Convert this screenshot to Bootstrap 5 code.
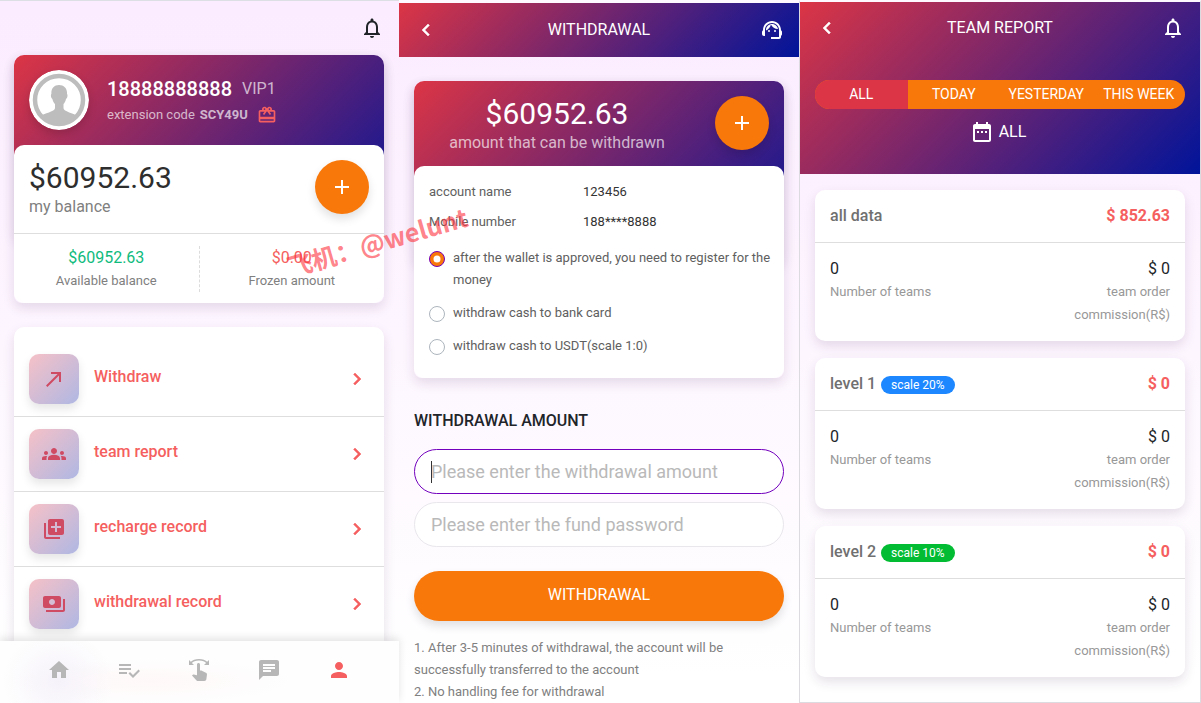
<!DOCTYPE html>
<html lang="en">
<head>
<meta charset="utf-8">
<meta name="viewport" content="width=device-width, initial-scale=1">
<title>Wallet</title>
<link href="https://cdn.jsdelivr.net/npm/bootstrap@5.3.0/dist/css/bootstrap.min.css" rel="stylesheet">
<style>
  :root { --brand: linear-gradient(135deg, #dc3545, #00149a); --orange: #f9780a; --coral: #f55f60; }
  body { font-family: Roboto, "Noto Sans CJK SC", sans-serif; font-size: 16px; line-height: 22px; color: #212529; background: #fff; }
  svg { fill: currentColor; display: block; flex: none; }
  .ic { width: 24px; height: 24px; }
  .screens { display: grid; grid-template-columns: 399fr 400fr 402fr; position: relative; }
  .screen { background: linear-gradient(#fbecff, #fff 96%); min-width: 0; }
  .account { border-top: 1px solid #dcdfe3; }
  .account .inset { padding-left: 14px; padding-right: 15px; }
  .withdraw { border-top: 3px solid #fdf9ff; }
  .report { border: 1px solid #dcdce0; border-top: 2px solid #fdf9ff; }
  .inset, .bar { padding-left: 15px; padding-right: 15px; }
  .bar { height: 54px; }
  .report .bar { height: 52px; }
  .text-13 { font-size: 13px; }
  .brand { background: var(--brand); color: #fff; }
  .raised { box-shadow: 0 5px 12px rgba(60, 20, 80, .13); }
  .hero { border-radius: 10px; padding: 15px 15px 110px; }
  .hero .who { margin-left: 18px; padding-top: 6px; }
  .sheet { background: #fff; border-radius: 10px; margin-top: -95px; }
  .balance { padding: 15px; }
  .stats { padding: 12px 0 11px; }
  .withdraw .sheet { margin-top: -98px; padding: 11px 15px 21px; }
  .avatar { width: 60px; height: 60px; border-radius: 50%; box-shadow: 0 4px 8px rgba(0,0,0,.15); }
  .name { font-size: 20px; line-height: 26px; font-weight: 500; gap: 10px; }
  .soft { color: rgba(255,255,255,.68); }
  .code { font-size: 13px; line-height: 26px; gap: 5px; }
  .sum { font-size: 30px; line-height: 36px; }
  .sheet .sum { color: #2e2e2e; }
  .under { line-height: 22px; }
  .muted { color: #808080; }
  .gain { color: #0fbb7d; }
  .plus { width: 54px; height: 54px; border: 0; border-radius: 50%; background: var(--orange); color: #fff; padding: 15px; box-shadow: 0 5px 10px rgba(0,0,0,.12); flex: none; }
  .hero .plus { margin-left: 30px; }
  .rule-b { border-bottom: 1px solid #dedede; }
  .half { line-height: 23px; flex: 1 1 0; text-align: center; }
  .half + .half { border-left: 1px dashed #dcdcdc; }
  .coral { color: var(--coral); }
  .menu { background: #fff; border-radius: 10px 10px 0 0; margin-top: 24px; padding-top: 15px; }
  .menu a { color: var(--coral); font-weight: 500; height: 75px; padding: 0 15px; gap: 15px; text-decoration: none; border-bottom: 1px solid #dedede; }
  .menu a:last-child { height: 74px; border-bottom: 0; }
  .tile { width: 50px; height: 50px; border-radius: 10px; padding: 13px; background: linear-gradient(135deg, #f6c1c7, #afb7e3); color: #cf4b63; box-shadow: 0 5px 10px rgba(0,0,0,.1); }
  .tabs { height: 62px; padding: 0 25px 4px 24px; position: relative; box-shadow: 0 -3px 8px rgba(0,0,0,.11);
    background: radial-gradient(55px 50px at 58px 40px, #f6f2fa, transparent), radial-gradient(140px 22px at 150px 40px, #fff8f8, transparent), #fefefe; }
  .tabs a { flex: 1 1 0; display: flex; justify-content: center; color: #b7b7b7; }
  .tabs a.coral { color: var(--coral); }
  .detail { line-height: 30px; margin: 0 0 10px; }
  .detail dt { font-weight: 400; color: #606060; width: 154px; }
  .detail dd { margin: 0; color: #333; }
  .choice { display: flex; gap: 8px; color: #606060; margin: 0 -8px 11px 0; }
  .choice .form-check-input { width: 16px; height: 16px; margin: 4px 0 0; flex: none; border-color: #adb5bd; }
  .choice .form-check-input:checked { background-color: var(--orange); border-color: #7500b8; }
  .heading { font-size: 16px; font-weight: 500; line-height: 24px; margin: 31px 0 16px; }
  .pill { height: 45px; border-radius: 23px; border: 1px solid #e9e6ec; font-size: 18px; padding: 0 16px; color: #212529; background: #fff; }
  .pill::placeholder { color: #b9b9b9; opacity: 1; }
  .pill.current { border-color: #7200bd; background: linear-gradient(#333, #333) 16px center / 1px 22px no-repeat #fff; }
  .go { height: 50px; border-radius: 25px; background: var(--orange); color: #fff; border: 0; box-shadow: 0 5px 10px rgba(0,0,0,.12); margin-top: 24px; padding: 0 0 2px; }
  .terms { margin: 16px 0 0; }
  .summary { padding-bottom: 30px; }
  .seg { border-radius: 15px; background: var(--orange); overflow: hidden; margin: 26px 0 11px; }
  .seg button { flex: 1 1 0; border: 0; padding: 0 0 2px; height: 29px; color: #fff; background: none; font-size: 14px; white-space: nowrap; }
  .seg button.on { background: #dc3545; }
  .range { gap: 5px; padding-right: 4px; }
  .level { background: #fff; border-radius: 10px; margin-bottom: 17px; }
  .level header { padding: 14px 15px; line-height: 24px; color: #707070; font-weight: 500; }
  .level header span { gap: 5px; }
  .level .figures { padding: 14px 15px 15px; line-height: 23px; }
  .level .note { font-size: 13px; color: #989898; }
  .level .right { width: 34%; text-align: right; }
  .scale { font-size: 12px; font-weight: 400; line-height: 18px; padding: 0 10px; border-radius: 9px; color: #fff; background: #1c87ff; margin-top: 2px; }
  .scale.green { background: #02bc33; }
  .stamp { position: absolute; left: 377px; top: 241px; font: 700 25px/30px "Noto Sans CJK SC", sans-serif; color: rgba(252, 50, 60, .62); white-space: nowrap; transform: translate(-50%, -50%) rotate(-16deg); pointer-events: none; }
</style>
</head>
<body>
<svg class="d-none" aria-hidden="true">
  <symbol id="bell" viewBox="0 0 24 24"><path d="M12 22c1.100 0 2-.9 2-2h-4c0 1.100.9 2 2 2zm6-6v-5c0-3.070-1.630-5.640-4.500-6.320V4c0-.83-.67-1.500-1.500-1.500s-1.500.67-1.500 1.500v.68C7.640 5.360 6 7.920 6 11v5l-2 2v1h16v-1l-2-2zm-2 1H8v-6c0-2.480 1.510-4.500 4-4.500s4 2.020 4 4.500v6z"/></symbol>
  <symbol id="left" viewBox="0 0 24 24"><path d="M15.410 7.410 14 6l-6 6 6 6 1.410-1.410L10.830 12z" stroke="currentColor" stroke-width=".5"/></symbol>
  <symbol id="right" viewBox="0 0 24 24"><path d="M10 6 8.590 7.410 13.170 12l-4.580 4.590L10 18l6-6z" stroke="currentColor" stroke-width=".5"/></symbol>
  <symbol id="plus" viewBox="0 0 24 24"><path d="M19 13h-6v6h-2v-6H5v-2h6V5h2v6h6v2z"/></symbol>
</svg>

<main class="screens min-vh-100">
  <section class="screen account d-flex flex-column">
    <div class="bar inset d-flex align-items-center justify-content-end">
      <a href="#" class="text-body" aria-label="Notifications"><svg class="ic"><use href="#bell"/></svg></a>
    </div>
    <div class="inset">
      <div class="raised rounded-3">
        <div class="hero brand raised d-flex">
          <svg class="avatar" viewBox="0 0 60 60" role="img" aria-label="Avatar">
            <circle cx="30" cy="30" r="30" fill="#fff"/><circle cx="30" cy="30" r="24" fill="#fff" stroke="#bdbdbd" stroke-width="4.500"/>
            <path fill="#bdbdbd" d="M30 15c-5 0-8 3.500-7.600 9-.9.600-.6 4.200 1 5 .5 2.500 1.600 4 2.600 5v4c0 3-6 4-14 7.500A25 25 0 0 0 48 45.500C40 42 34.500 41 34.500 38v-4c1-1 2-2.500 2.500-5 1.600-.8 1.900-4.400 1-5C38.400 18.500 35 15 30 15z"/>
          </svg>
          <div class="who">
            <div class="name d-flex">18888888888 <span class="soft fs-6 fw-normal">VIP1</span></div>
            <div class="code soft d-flex align-items-center">extension code <b class="fw-bold me-1">SCY49U</b>
              <svg class="coral" width="20" height="20" viewBox="0 0 24 24"><path d="M20 6h-2.180c.11-.31.18-.65.18-1 0-1.660-1.340-3-3-3-1.050 0-1.960.54-2.500 1.350l-.5.67-.5-.68C10.960 2.540 10.050 2 9 2 7.340 2 6 3.340 6 5c0 .35.070.69.18 1H4c-1.110 0-1.990.89-1.990 2L2 19c0 1.110.89 2 2 2h16c1.110 0 2-.89 2-2V8c0-1.110-.89-2-2-2zm-5-2c.55 0 1 .45 1 1s-.45 1-1 1-1-.45-1-1 .45-1 1-1zM9 4c.55 0 1 .45 1 1s-.45 1-1 1-1-.45-1-1 .45-1 1-1zm11 15H4v-2h16v2zm0-5H4V8h5.080L7 10.830 8.620 12 11 8.760l1-1.360 1 1.360L15.380 12 17 10.830 14.920 8H20v6z"/></svg>
            </div>
          </div>
        </div>
        <div class="sheet">
          <div class="balance d-flex justify-content-between rule-b">
            <div><div class="sum">$60952.63</div><div class="under muted">my balance</div></div>
            <button class="plus" aria-label="Recharge"><svg class="ic"><use href="#plus"/></svg></button>
          </div>
          <div class="stats d-flex">
            <div class="half"><div class="gain">$60952.63</div><div class="text-13 muted">Available balance</div></div>
            <div class="half"><div class="coral">$0.00</div><div class="text-13 muted">Frozen amount</div></div>
          </div>
        </div>
      </div>
      <nav class="menu raised">
        <a href="#" class="d-flex align-items-center"><span class="tile"><svg class="ic" viewBox="0 0 24 24"><path d="M9 5v2h6.590L4 18.590 5.410 20 17 8.410V15h2V5z"/></svg></span><span class="pb-1">Withdraw</span><svg class="ic ms-auto"><use href="#right"/></svg></a>
        <a href="#" class="d-flex align-items-center"><span class="tile"><svg class="ic" viewBox="0 0 24 24"><path d="M12 12.750c1.630 0 3.070.39 4.240.9 1.080.48 1.760 1.560 1.760 2.730V18H6v-1.610c0-1.180.68-2.260 1.760-2.730 1.170-.52 2.610-.91 4.240-.91zM4 13c1.100 0 2-.9 2-2s-.9-2-2-2-2 .9-2 2 .9 2 2 2zm1.130 1.100c-.37-.06-.74-.1-1.130-.1-.99 0-1.930.21-2.780.58C.48 14.900 0 15.620 0 16.430V18h4.500v-1.610c0-.83.23-1.610.63-2.290zM20 13c1.100 0 2-.9 2-2s-.9-2-2-2-2 .9-2 2 .9 2 2 2zm4 3.430c0-.81-.48-1.530-1.220-1.850-.85-.37-1.790-.58-2.780-.58-.39 0-.76.04-1.130.1.4.68.63 1.460.63 2.290V18H24v-1.570zM12 6c1.660 0 3 1.340 3 3s-1.340 3-3 3-3-1.340-3-3 1.340-3 3-3z"/></svg></span><span class="pb-1">team report</span><svg class="ic ms-auto"><use href="#right"/></svg></a>
        <a href="#" class="d-flex align-items-center"><span class="tile"><svg class="ic" viewBox="0 0 24 24"><path d="M4 6H2v14c0 1.100.9 2 2 2h14v-2H4V6zm16-4H8c-1.100 0-2 .9-2 2v12c0 1.100.9 2 2 2h12c1.100 0 2-.9 2-2V4c0-1.100-.9-2-2-2zm-1 9h-4v4h-2v-4H9V9h4V5h2v4h4v2z"/></svg></span><span class="pb-1">recharge record</span><svg class="ic ms-auto"><use href="#right"/></svg></a>
        <a href="#" class="d-flex align-items-center"><span class="tile"><svg class="ic" viewBox="0 0 24 24"><path d="M19 14V6c0-1.100-.9-2-2-2H3c-1.100 0-2 .9-2 2v8c0 1.100.9 2 2 2h14c1.100 0 2-.9 2-2zm-9-1c-1.660 0-3-1.340-3-3s1.340-3 3-3 3 1.340 3 3-1.340 3-3 3zm13-6v11c0 1.100-.9 2-2 2H4v-2h17V7h2z"/></svg></span><span class="pb-1">withdrawal record</span><svg class="ic ms-auto"><use href="#right"/></svg></a>
      </nav>
    </div>
    <nav class="tabs d-flex align-items-center mt-auto">
      <a href="#" aria-label="Home"><svg class="ic" viewBox="0 0 24 24"><path d="M10 20v-6h4v6h5v-8h3L12 3 2 12h3v8z"/></svg></a>
      <a href="#" aria-label="Orders"><svg class="ic" viewBox="0 0 24 24"><path d="M14 10H2v2h12v-2zm0-4H2v2h12V6zM2 16h8v-2H2v2zm19.500-4.500L23 13l-6.990 7-4.510-4.500L13 14l3.010 3 5.490-5.500z"/></svg></a>
      <a href="#" aria-label="Grab"><svg class="ic" viewBox="0 0 24 24"><path d="M18.890 14.750l-4.090-2.040c-.28-.14-.58-.21-.89-.21H13v-6C13 5.670 12.330 5 11.500 5S10 5.670 10 6.500v10.740L6.750 16.500c-.33-.07-.68.03-.92.28l-.83.84 4.540 4.790c.38.38 1.140.59 1.670.59h6.160c1 0 1.840-.73 1.980-1.720l.63-4.460c.12-.85-.32-1.690-1.090-2.070zM20.130 3.870C18.690 2.170 15.600 1 12 1S5.310 2.170 3.870 3.870L2 2v5h5L4.930 4.930c1-1.290 3.700-2.430 7.070-2.430s6.070 1.140 7.070 2.430L17 7h5V2l-1.870 1.870z"/></svg></a>
      <a href="#" aria-label="Messages"><svg class="ic" viewBox="0 0 24 24"><path d="M20 2H4c-1.100 0-1.990.9-1.990 2L2 22l4-4h14c1.100 0 2-.9 2-2V4c0-1.100-.9-2-2-2zM6 9h12v2H6V9zm8 5H6v-2h8v2zm4-6H6V6h12v2z"/></svg></a>
      <a href="#" class="coral" aria-label="Account"><svg class="ic" viewBox="0 0 24 24"><path d="M12 12c2.210 0 4-1.790 4-4s-1.790-4-4-4-4 1.790-4 4 1.790 4 4 4zm0 2c-2.670 0-8 1.340-8 4v2h16v-2c0-2.660-5.330-4-8-4z"/></svg></a>
    </nav>
  </section>

  <section class="screen withdraw">
    <header class="bar brand d-flex align-items-center justify-content-between">
      <a href="#" class="text-white" aria-label="Back"><svg class="ic"><use href="#left"/></svg></a>
      <span>WITHDRAWAL</span>
      <a href="#" class="text-white" aria-label="Support"><svg class="ic" viewBox="0 0 24 24"><path d="M21 12.220C21 6.730 16.740 3 12 3c-4.690 0-9 3.650-9 9.280-.6.34-1 .98-1 1.720v2c0 1.100.9 2 2 2h1v-6.100c0-3.870 3.130-7 7-7s7 3.130 7 7V19h-8v2h8c1.100 0 2-.9 2-2v-1.220c.59-.31 1-.92 1-1.640v-2.300c0-.7-.41-1.310-1-1.620z"/><circle cx="9" cy="13" r="1"/><circle cx="15" cy="13" r="1"/><path d="M18 11.030C17.520 8.180 15.040 6 12.050 6c-3.030 0-6.290 2.510-6.030 6.450 2.470-1.010 4.330-3.210 4.860-5.890 1.310 2.630 4 4.440 7.120 4.470z"/></svg></a>
    </header>
    <form class="inset pt-4">
      <div class="raised rounded-3">
        <div class="hero brand raised d-flex">
          <div class="flex-fill text-center"><div class="sum">$60952.63</div><div class="under soft">amount that can be withdrawn</div></div>
          <button type="button" class="plus" aria-label="Recharge"><svg class="ic"><use href="#plus"/></svg></button>
        </div>
        <div class="sheet text-13">
          <dl class="detail">
            <div class="d-flex"><dt>account name</dt><dd>123456</dd></div>
            <div class="d-flex"><dt>Mobile number</dt><dd>188****8888</dd></div>
          </dl>
          <div class="choice"><input class="form-check-input" type="radio" name="way" id="w1" checked><label for="w1">after the wallet is approved, you need to register for the money</label></div>
          <div class="choice"><input class="form-check-input" type="radio" name="way" id="w2"><label for="w2">withdraw cash to bank card</label></div>
          <div class="choice mb-0"><input class="form-check-input" type="radio" name="way" id="w3"><label for="w3">withdraw cash to USDT(scale 1:0)</label></div>
        </div>
      </div>
      <h2 class="heading">WITHDRAWAL AMOUNT</h2>
      <input class="pill current w-100 d-block mb-2" type="text" aria-label="Withdrawal amount" placeholder="Please enter the withdrawal amount">
      <input class="pill w-100 d-block" type="password" aria-label="Fund password" placeholder="Please enter the fund password">
      <button type="submit" class="go w-100 d-block">WITHDRAWAL</button>
      <p class="terms text-13 muted">1. After 3-5 minutes of withdrawal, the account will be successfully transferred to the account<br>2. No handling fee for withdrawal</p>
    </form>
  </section>

  <section class="screen report">
    <div class="summary brand">
      <header class="bar d-flex align-items-center justify-content-between">
        <a href="#" class="text-white" aria-label="Back"><svg class="ic"><use href="#left"/></svg></a>
        <span>TEAM REPORT</span>
        <a href="#" class="text-white" aria-label="Notifications"><svg class="ic"><use href="#bell"/></svg></a>
      </header>
      <div class="inset">
        <div class="seg d-flex"><button class="on">ALL</button><button>TODAY</button><button>YESTERDAY</button><button>THIS WEEK</button></div>
        <div class="range d-flex justify-content-center align-items-center">
          <svg class="ic" viewBox="0 0 24 24"><path d="M9 11H7v2h2v-2zm4 0h-2v2h2v-2zm4 0h-2v2h2v-2zm2-7h-1V2h-2v2H8V2H6v2H5c-1.110 0-1.990.9-1.990 2L3 20c0 1.100.89 2 2 2h14c1.100 0 2-.9 2-2V6c0-1.100-.9-2-2-2zm0 16H5V9h14v11z"/></svg><span>ALL</span>
        </div>
      </div>
    </div>
    <div class="inset pt-3">
      <article class="level raised">
        <header class="d-flex justify-content-between rule-b"><span>all data</span><b class="coral">$ 852.63</b></header>
        <div class="figures d-flex justify-content-between"><div>0<div class="note">Number of teams</div></div><div class="right">$ 0<div class="note">team order commission(R$)</div></div></div>
      </article>
      <article class="level raised">
        <header class="d-flex justify-content-between rule-b"><span class="d-flex align-items-center">level 1 <small class="scale">scale 20%</small></span><b class="coral">$ 0</b></header>
        <div class="figures d-flex justify-content-between"><div>0<div class="note">Number of teams</div></div><div class="right">$ 0<div class="note">team order commission(R$)</div></div></div>
      </article>
      <article class="level raised">
        <header class="d-flex justify-content-between rule-b"><span class="d-flex align-items-center">level 2 <small class="scale green">scale 10%</small></span><b class="coral">$ 0</b></header>
        <div class="figures d-flex justify-content-between"><div>0<div class="note">Number of teams</div></div><div class="right">$ 0<div class="note">team order commission(R$)</div></div></div>
      </article>
    </div>
  </section>
  <div class="stamp">飞机：@welunt</div>
</main>
<script src="https://cdn.jsdelivr.net/npm/bootstrap@5.3.0/dist/js/bootstrap.bundle.min.js"></script>
</body>
</html>
